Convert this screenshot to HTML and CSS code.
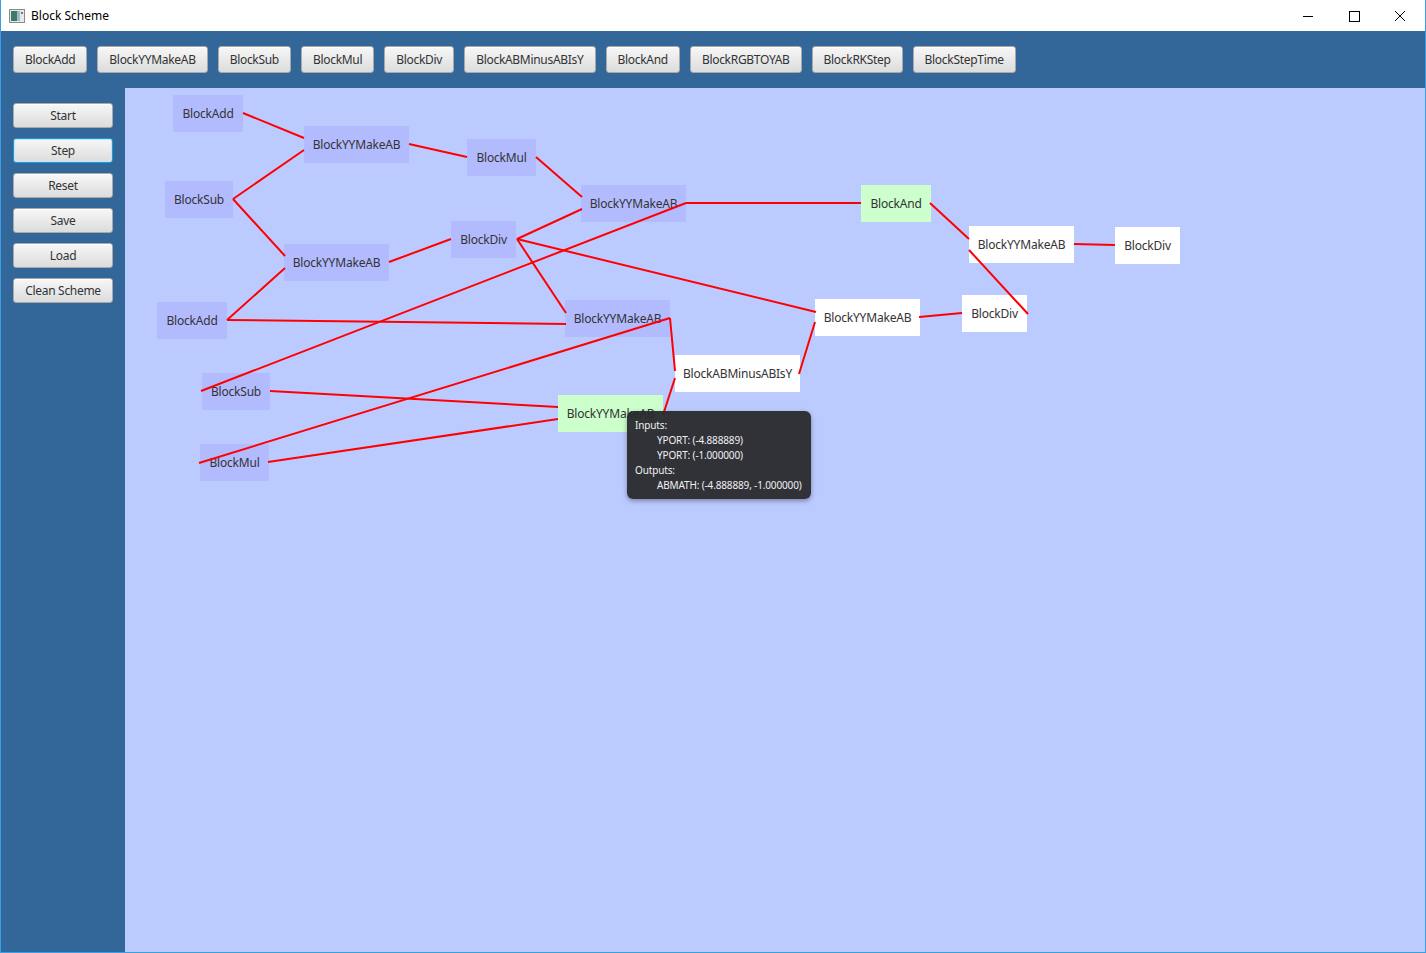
FILE: index.html
```html
<!DOCTYPE html>
<html>
<head>
<meta charset="utf-8">
<link rel="stylesheet" href="styles.css">
</head>
<body>
<div class="window">
  <div class="titlebar">
    <svg class="app-icon" width="16" height="14" viewBox="0 0 16 14">
      <rect x="0.5" y="0.5" width="15" height="13" fill="#e8e8e8" stroke="#8a8a8a"/>
      <rect x="2" y="2" width="6" height="10" fill="#3f7a6a"/>
      <rect x="8" y="2" width="3" height="10" fill="#9fb9c8"/>
      <rect x="12" y="3" width="2" height="2" fill="#7a7a7a"/>
    </svg>
    <span class="title">Block Scheme</span>
    <div class="controls">
      <svg class="ctl" width="46" height="30" viewBox="0 0 46 30"><line x1="18" y1="15.5" x2="28" y2="15.5" stroke="#000" stroke-width="1"/></svg>
      <svg class="ctl" width="46" height="30" viewBox="0 0 46 30"><rect x="18.5" y="10.5" width="10" height="10" fill="none" stroke="#000" stroke-width="1"/></svg>
      <svg class="ctl" width="46" height="30" viewBox="0 0 46 30"><path d="M18 10 L28 20 M28 10 L18 20" stroke="#000" stroke-width="1"/></svg>
    </div>
  </div>
  <div class="app">
    <div class="toolbar">
      <button class="btn">BlockAdd</button>
      <button class="btn">BlockYYMakeAB</button>
      <button class="btn">BlockSub</button>
      <button class="btn">BlockMul</button>
      <button class="btn">BlockDiv</button>
      <button class="btn">BlockABMinusABIsY</button>
      <button class="btn">BlockAnd</button>
      <button class="btn">BlockRGBTOYAB</button>
      <button class="btn">BlockRKStep</button>
      <button class="btn">BlockStepTime</button>
    </div>
    <div class="content">
      <div class="sidebar">
        <button class="side-btn">Start</button>
        <button class="side-btn focused">Step</button>
        <button class="side-btn">Reset</button>
        <button class="side-btn">Save</button>
        <button class="side-btn">Load</button>
        <button class="side-btn">Clean Scheme</button>
      </div>
      <div class="canvas">
        <div class="node purple" style="left:48px;top:7px;width:70px">BlockAdd</div>
        <div class="node purple" style="left:179px;top:38px;width:105px">BlockYYMakeAB</div>
        <div class="node purple" style="left:342px;top:51px;width:69px">BlockMul</div>
        <div class="node purple" style="left:40px;top:93px;width:68px">BlockSub</div>
        <div class="node purple" style="left:159px;top:156px;width:105px">BlockYYMakeAB</div>
        <div class="node purple" style="left:326px;top:133px;width:65px">BlockDiv</div>
        <div class="node purple" style="left:456px;top:97px;width:105px">BlockYYMakeAB</div>
        <div class="node green" style="left:736px;top:97px;width:70px">BlockAnd</div>
        <div class="node white" style="left:844px;top:138px;width:105px">BlockYYMakeAB</div>
        <div class="node white" style="left:990px;top:139px;width:65px">BlockDiv</div>
        <div class="node purple" style="left:32px;top:214px;width:70px">BlockAdd</div>
        <div class="node purple" style="left:440px;top:212px;width:105px">BlockYYMakeAB</div>
        <div class="node white" style="left:690px;top:211px;width:105px">BlockYYMakeAB</div>
        <div class="node white" style="left:837px;top:207px;width:65px">BlockDiv</div>
        <div class="node white" style="left:550px;top:267px;width:125px">BlockABMinusABIsY</div>
        <div class="node purple" style="left:77px;top:285px;width:68px">BlockSub</div>
        <div class="node green" style="left:433px;top:307px;width:105px">BlockYYMakeAB</div>
        <div class="node purple" style="left:75px;top:356px;width:69px">BlockMul</div>

        <svg class="wires" width="1300" height="864" viewBox="0 0 1300 864">
          <g stroke="#ff0000" stroke-width="2" fill="none">
            <line x1="118" y1="25" x2="179" y2="50"/>
            <line x1="108" y1="111" x2="179" y2="62"/>
            <line x1="108" y1="111" x2="160" y2="168"/>
            <line x1="284" y1="56" x2="342" y2="69"/>
            <line x1="411" y1="69" x2="457" y2="109"/>
            <line x1="264" y1="174" x2="326" y2="151"/>
            <line x1="392" y1="151" x2="457" y2="121"/>
            <line x1="392" y1="151" x2="441" y2="225"/>
            <line x1="392" y1="151" x2="691" y2="224"/>
            <line x1="561" y1="115" x2="736" y2="115"/>
            <line x1="76" y1="303" x2="561" y2="115"/>
            <line x1="102" y1="232" x2="160" y2="180"/>
            <line x1="102" y1="232" x2="441" y2="236"/>
            <line x1="145" y1="303" x2="433" y2="319"/>
            <line x1="74" y1="375" x2="545" y2="230"/>
            <line x1="143" y1="374" x2="433" y2="331"/>
            <line x1="545" y1="230" x2="550" y2="283"/>
            <line x1="550" y1="290" x2="538" y2="327"/>
            <line x1="674" y1="286" x2="690" y2="234"/>
            <line x1="794" y1="229" x2="837" y2="225"/>
            <line x1="805" y1="115" x2="844" y2="151"/>
            <line x1="844" y1="162" x2="903" y2="226"/>
            <line x1="949" y1="156" x2="990" y2="157"/>
          </g>
        </svg>

        <div class="tooltip" style="left:502px;top:323px">
          <div class="tip-line">Inputs:</div>
          <div class="tip-line indent">YPORT: (-4.888889)</div>
          <div class="tip-line indent">YPORT: (-1.000000)</div>
          <div class="tip-line">Outputs:</div>
          <div class="tip-line indent">ABMATH: (-4.888889, -1.000000)</div>
        </div>
      </div>
    </div>
  </div>
</div>
</body>
</html>
```

FILE: styles.css
```css
* { box-sizing: border-box; }
html, body {
  margin: 0;
  padding: 0;
  width: 1426px;
  height: 953px;
  overflow: hidden;
  font-family: "Noto Sans", "Open Sans", "Liberation Sans", sans-serif;
}
.window {
  width: 1426px;
  height: 953px;
  border: 1px solid #3a9de6;
  border-top: none;
  display: flex;
  flex-direction: column;
  background: #336699;
}
.titlebar {
  height: 31px;
  background: #ffffff;
  display: flex;
  align-items: center;
  flex-shrink: 0;
}
.app-icon {
  margin-left: 8px;
  margin-right: 6px;
}
.title {
  font-size: 12px;
  color: #000;
  flex: 1;
  margin-top: -1px;
}
.controls {
  display: flex;
  margin-right: 2px;
}
.ctl { display: block; }
.app {
  flex: 1;
  display: flex;
  flex-direction: column;
  min-height: 0;
}
.toolbar {
  height: 57px;
  display: flex;
  align-items: flex-start;
  gap: 10px;
  padding: 15px 0 0 12px;
  flex-shrink: 0;
}
.btn, .side-btn {
  font-family: "Noto Sans", "Open Sans", sans-serif;
  font-size: 12px;
  color: #333;
  background: linear-gradient(#f7f7f7, #dcdcdc);
  border: 1px solid #a9a9a9;
  border-radius: 3px;
  box-shadow: inset 0 1px 0 #ffffff;
  padding: 0;
  margin: 0;
  letter-spacing: -0.3px;
}
.btn {
  height: 27px;
  padding: 0 11px;
}
.content {
  flex: 1;
  display: flex;
  min-height: 0;
}
.sidebar {
  width: 124px;
  flex-shrink: 0;
  display: flex;
  flex-direction: column;
  gap: 10px;
  padding: 15px 0 0 12px;
}
.side-btn {
  width: 100px;
  height: 25px;
}
.side-btn.focused {
  border-color: #1d9ad6;
  box-shadow: inset 0 0 0 1px #bfe6f7;
}
.canvas {
  flex: 1;
  position: relative;
  background: #bccbff;
  overflow: hidden;
}
.node {
  position: absolute;
  height: 37px;
  display: flex;
  align-items: center;
  justify-content: center;
  font-size: 12px;
  color: #333;
  letter-spacing: -0.2px;
  white-space: nowrap;
}
.node.purple { background: #b3bbff; }
.node.green { background: #ccffcc; }
.node.white { background: #ffffff; }
.wires {
  position: absolute;
  left: 0;
  top: 0;
}
.tooltip {
  position: absolute;
  width: 184px;
  height: 88px;
  background: rgba(40, 41, 45, 0.95);
  border-radius: 6px;
  box-shadow: 0 2px 5px rgba(0, 0, 0, 0.35);
  padding: 7px 0 0 8px;
  color: #f0f0f0;
  font-size: 10px;
  letter-spacing: -0.15px;
}
.tip-line {
  height: 15px;
  line-height: 15px;
  white-space: nowrap;
}
.tip-line.indent { padding-left: 22px; }
```
